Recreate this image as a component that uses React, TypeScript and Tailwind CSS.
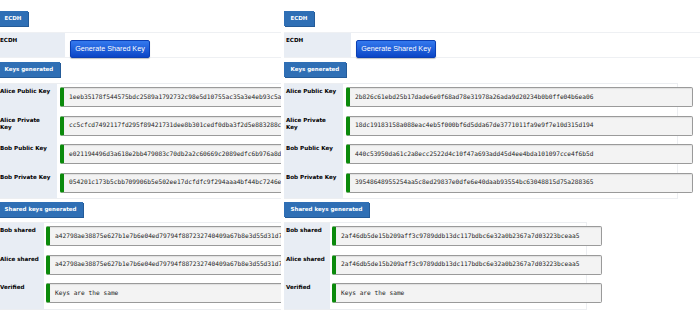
import React from "react";

const SANS = "font-['DejaVu_Sans',Verdana,sans-serif]";

function Badge({ children, className = "" }: { children: React.ReactNode; className?: string }) {
  return (
    <div className={`h-[15px] flex items-center px-[6.5px] bg-[#2f6fb5] text-white font-bold text-[5.5px] leading-none shadow-[1px_1px_0_#245b98] ${SANS} ${className}`}>
      {children}
    </div>
  );
}

function Field({ value, width }: { value: string; width: string }) {
  return (
    <div
      className={`${width} h-[20px] mt-[3px] shrink-0 flex items-center bg-[#f3f3f3] border border-[#9a9a9a] border-l-[4px] border-l-[#0b8a0b] rounded-[2px] pl-[5px] font-['DejaVu_Sans_Mono',monospace] text-[6.2px] leading-none text-[#262626] whitespace-nowrap overflow-hidden shadow-[inset_0_1px_1px_rgba(0,0,0,0.08)]`}
    >
      {value}
    </div>
  );
}

function Label({ lines, width }: { lines: string[]; width: string }) {
  return (
    <div className={`${width} shrink-0 bg-[#e8edf4] pl-[2px] pt-[4px] font-bold text-[5.6px] leading-[7.2px] text-black whitespace-nowrap ${SANS}`}>
      {lines.map((t) => (
        <div key={t}>{t}</div>
      ))}
    </div>
  );
}

type Data = { keys: string[]; shared: string[] };

function Panel({ data }: { data: Data }) {
  const keyLabels = [["Alice Public Key"], ["Alice Private", "Key"], ["Bob Public Key"], ["Bob Private Key"]];
  const sharedLabels = [["Bob shared"], ["Alice shared"], ["Verified"]];
  return (
    <div className="flex flex-col items-start pt-[11px]">
      <Badge>ECDH</Badge>
      <div className="mt-[6px] w-full h-[26px] flex border-y border-[#eef0f3]">
        <Label lines={["ECDH"]} width="w-[67px]" />
        <div className="flex-1 bg-white">
          <button className="ml-[5px] mt-[2px] w-[80px] h-[18px] rounded-[2px] border border-[#0b3fb3] bg-linear-to-b from-[#3479ee] to-[#0b45c6] text-white text-[7.2px] leading-none font-['Liberation_Sans',Arial,sans-serif] shadow-[0_1px_1px_rgba(0,0,0,0.25)]">
            Generate Shared Key
          </button>
        </div>
      </div>
      <Badge className="mt-[4px]">Keys generated</Badge>
      <div className="mt-[6px] w-[394px] flex flex-col border-y border-r border-[#eceef1]">
        {keyLabels.map((l, i) => (
          <div key={l.join(" ")} className="flex gap-[3px] h-[28.5px]">
            <Label lines={l} width="w-[59px]" />
            <Field value={data.keys[i]} width="w-[347px]" />
          </div>
        ))}
      </div>
      <Badge className="mt-[3px]">Shared keys generated</Badge>
      <div className="mt-[5px] w-[303px] flex flex-col border-y border-r border-[#eceef1]">
        {sharedLabels.map((l, i) => (
          <div key={l.join(" ")} className="flex gap-[2px] h-[28.5px]">
            <Label lines={l} width="w-[46px]" />
            <Field value={data.shared[i]} width="w-[270px]" />
          </div>
        ))}
      </div>
    </div>
  );
}

const left: Data = {
  keys: [
    "1eeb35178f544575bdc2589a1792732c98e5d10755ac35a3e4eb93c5a81f0c2de4",
    "cc5cfcd7492117fd295f89421731dee8b301cedf0dba3f2d5e883288c0a71b93f2",
    "e021194496d3a618e2bb479083c70db2a2c60669c2089edfc6b976a8d5e2f0417c",
    "054201c173b5cbb709906b5e502ee17dcfdfc9f294aaa4bf44bc7246e9a03d51b8",
  ],
  shared: [
    "a42798ae38875e627b1e7b6e04ed79794f887232740409a67b8e3d55d31d7f2a96",
    "a42798ae38875e627b1e7b6e04ed79794f887232740409a67b8e3d55d31d7f2a96",
    "Keys are the same",
  ],
};

const right: Data = {
  keys: [
    "2b826c61ebd25b17dade6e0f68ad78e31978a26ada9d20234b0b0ffe04b6ea06",
    "18dc19183158a088eac4eb5f000bf6d5dda67de3771011fa9e9f7e10d315d194",
    "440c53950da61c2a8ecc2522d4c10f47a693add45d4ee4bda101097cce4f6b5d",
    "39548648955254aa5c8ed29837e0dfe6e40daab93554bc63048815d75a288365",
  ],
  shared: [
    "2af46db5de15b209aff3c9789ddb13dc117bdbc6e32a0b2367a7d03223bceaa5",
    "2af46db5de15b209aff3c9789ddb13dc117bdbc6e32a0b2367a7d03223bceaa5",
    "Keys are the same",
  ],
};

export default function App() {
  return (
    <div className="w-[700px] h-[312px] bg-white flex overflow-hidden">
      <div className="w-[281px] shrink-0 overflow-hidden">
        <div className="ml-[-2px] w-[420px]">
          <Panel data={left} />
        </div>
      </div>
      <div className="w-[3px] shrink-0 bg-white" />
      <div className="flex-1 min-w-0 overflow-hidden bg-white">
        <Panel data={right} />
      </div>
    </div>
  );
}
